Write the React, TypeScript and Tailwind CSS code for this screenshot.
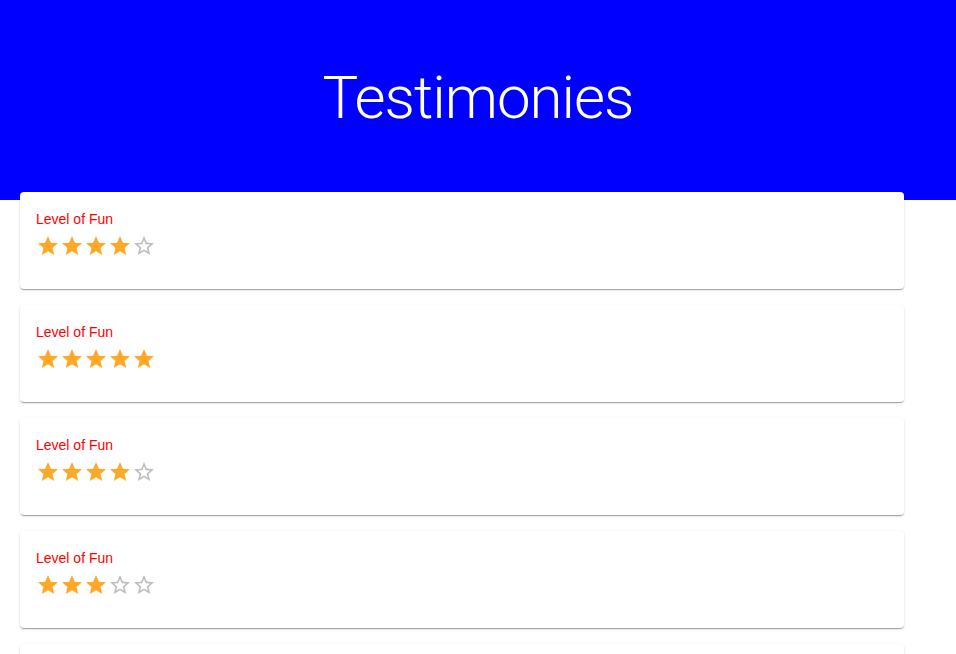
const ratings = [4, 5, 4, 3, 4]

const FULL = 'M12 17.27L18.18 21l-1.64-7.03L22 9.24l-7.19-.61L12 2 9.19 8.63 2 9.24l5.46 4.73L5.82 21z'
const EMPTY =
  'M22 9.24l-7.19-.62L12 2 9.19 8.63 2 9.24l5.46 4.73L5.82 21 12 17.27 18.18 21l-1.63-7.03L22 9.24zM12 15.4l-3.76 2.27 1-4.28-3.32-2.88 4.38-.38L12 6.1l1.71 4.04 4.38.38-3.32 2.88 1 4.28L12 15.4z'

const Star = ({ filled }: { filled: boolean }) => (
  <svg viewBox="0 0 24 24" className={`w-6 h-6 ${filled ? 'fill-[#ffa726]' : 'fill-[#bdbdbd]'}`}>
    <path d={filled ? FULL : EMPTY} />
  </svg>
)

export default function App() {
  return (
    <div className="min-h-screen bg-white font-['Liberation_Sans',Arial,sans-serif]">
      <header className="h-[200px] bg-[#0000ff] flex justify-center pt-[63px]">
        <h1 className="text-white text-[60px] leading-[70px] font-light font-['Roboto',sans-serif] tracking-[-1px]">
          Testimonies
        </h1>
      </header>

      <div className="-mt-[8px] w-[884px] ml-5 flex flex-col gap-4">
        {ratings.map((r, i) => (
          <div
            key={i}
            className="h-[97px] bg-white rounded px-4 pt-[17px] shadow-[0_2px_1px_-1px_rgba(0,0,0,0.2),0_1px_1px_0_rgba(0,0,0,0.14),0_1px_3px_0_rgba(0,0,0,0.12)]"
          >
            <p className="text-[14px] leading-5 text-[#ff0000]">Level of Fun</p>
            <div className="flex mt-[5px]">
              {[1, 2, 3, 4, 5].map((n) => (
                <Star key={n} filled={n <= r} />
              ))}
            </div>
          </div>
        ))}
      </div>
    </div>
  )
}
